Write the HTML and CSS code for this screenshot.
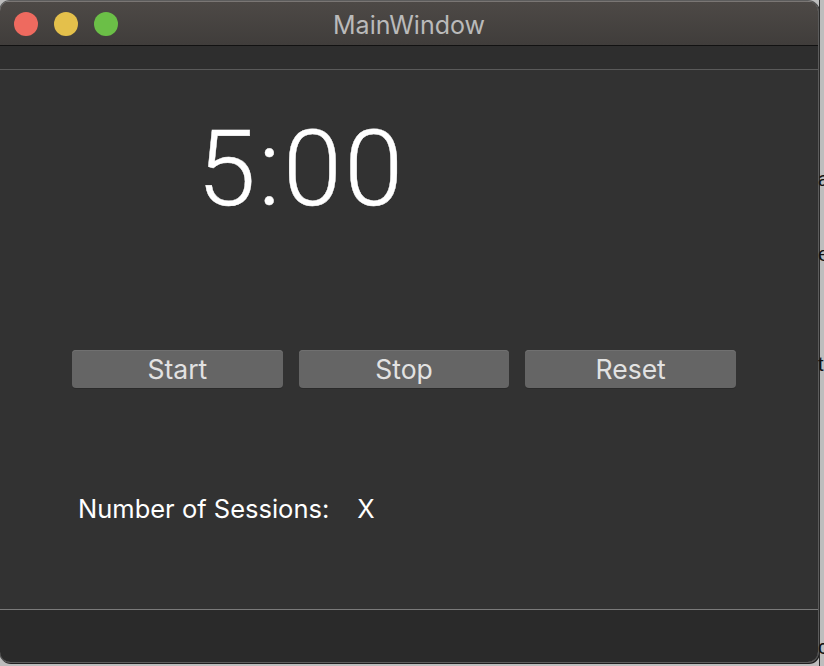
FILE: index.html
```html
<!DOCTYPE html>
<html>
<head>
<meta charset="utf-8">
<link rel="stylesheet" href="styles.css">
</head>
<body>
<div class="window">
  <div class="titlebar">
    <div class="lights">
      <span class="light red"></span>
      <span class="light yellow"></span>
      <span class="light green"></span>
    </div>
    <div class="title">MainWindow</div>
    <div></div>
  </div>
  <div class="toolbar"></div>
  <div class="content">
    <div class="timer">5:00</div>
    <div class="buttons">
      <button class="btn">Start</button>
      <button class="btn">Stop</button>
      <button class="btn">Reset</button>
    </div>
    <div class="sessions"><span>Number of Sessions:</span><span class="count">X</span></div>
  </div>
  <div class="statusbar"></div>
</div>
<div class="behind">
  <span class="frag f1">a</span>
  <span class="frag f2">e</span>
  <span class="frag f3">t</span>
  <span class="frag f4">c</span>
</div>
</body>
</html>
```

FILE: styles.css
```css
html, body {
  margin: 0;
  padding: 0;
}
body {
  width: 824px;
  height: 666px;
  overflow: hidden;
  background: #bdbdbd;
  display: flex;
  align-items: flex-start;
  font-family: "Inter", "Liberation Sans", sans-serif;
}
.window {
  width: 818px;
  height: 661px;
  margin-top: 1px;
  border-radius: 10px;
  overflow: hidden;
  display: flex;
  flex-direction: column;
  box-shadow: 0 0 0 1px #5c5c5c, 1px 1px 0 1px #1e1e1e;
  flex-shrink: 0;
}
.titlebar {
  height: 43px;
  background: linear-gradient(#4d4946, #403d3b);
  border-top: 1px solid #7a7674;
  border-bottom: 1px solid #121212;
  display: grid;
  grid-template-columns: 1fr auto 1fr;
  align-items: center;
}
.lights {
  display: flex;
  gap: 16px;
  padding-left: 14px;
  margin-top: 1px;
}
.light {
  width: 24px;
  height: 24px;
  border-radius: 50%;
  display: block;
}
.red { background: #ee6a5f; }
.yellow { background: #e4c04b; }
.green { background: #6bbf47; }
.title {
  color: #bababa;
  font-size: 25px;
  font-family: "Inter", "Liberation Sans", sans-serif;
  margin-top: 2px;
}
.toolbar {
  height: 23px;
  background: #2e2e2e;
  border-bottom: 1px solid #5a5a5a;
}
.content {
  flex: 1;
  background: #323232;
  display: flex;
  flex-direction: column;
}
.timer {
  margin-top: 46px;
  margin-left: 197px;
  height: 106px;
  line-height: 106px;
  font-family: "Roboto", sans-serif;
  font-weight: 300;
  font-size: 106px;
  letter-spacing: 2.5px;
  color: #ffffff;
  -webkit-text-stroke: 0.4px #ffffff;
}
.buttons {
  margin-top: 128px;
  margin-left: 72px;
  width: 664px;
  display: flex;
  gap: 16px;
}
.btn {
  flex: 1;
  height: 38px;
  border: none;
  border-radius: 4px;
  background: #656565;
  box-shadow: inset 0 1px 0 #707070, 0 1px 0 #2a2a2a;
  color: #e2e2e2;
  font-family: "Inter", "Liberation Sans", sans-serif;
  font-size: 26.5px;
  padding: 0;
  line-height: 38px;
}
.sessions {
  margin-top: 106px;
  margin-left: 78px;
  display: flex;
  gap: 28px;
  color: #ffffff;
  font-size: 25.5px;
  line-height: 30px;
}
.statusbar {
  height: 52px;
  background: #2a2a2a;
  border-top: 1px solid #7a7a7a;
}
.behind {
  flex: 1;
  height: 666px;
  position: relative;
  border-left: 1px solid #2a2a2a;
  margin-left: 1px;
}
.frag {
  position: absolute;
  left: -2px;
  font-family: "Liberation Sans", sans-serif;
  font-size: 20px;
  color: #111;
}
.f1 { top: 168px; }
.f2 { top: 243px; }
.f3 { top: 353px; }
.f4 { top: 636px; }
```
